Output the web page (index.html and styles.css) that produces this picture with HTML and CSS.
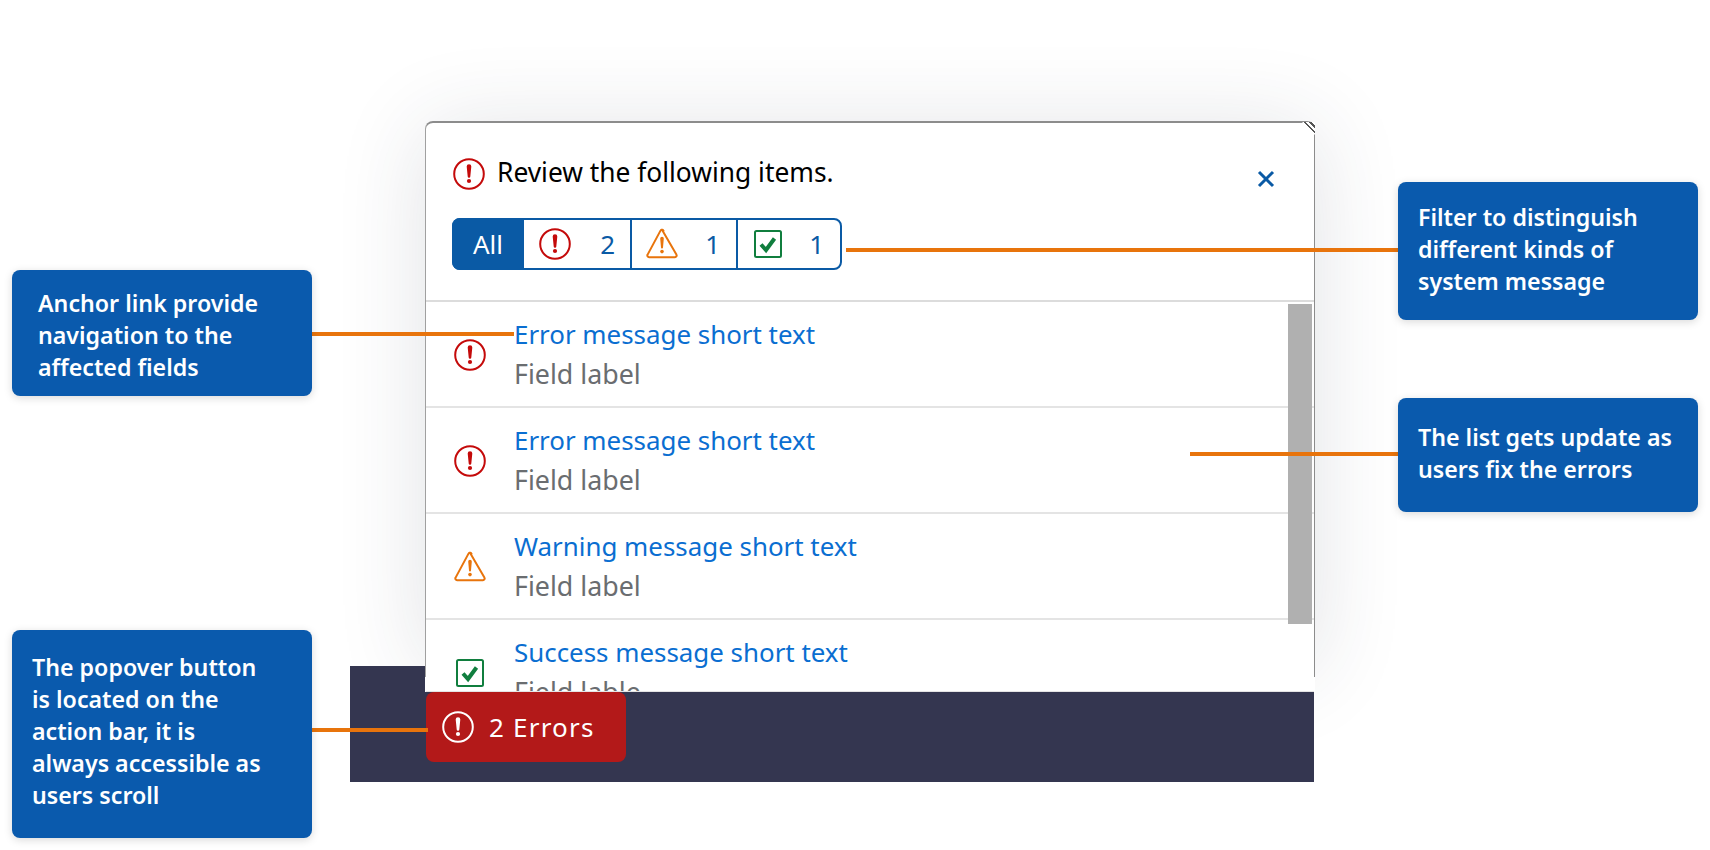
FILE: index.html
```html
<!DOCTYPE html>
<html lang="en">
<head>
    <meta charset="UTF-8">
    <title>Message popover annotations</title>
    <link rel="stylesheet" href="styles.css">
</head>
<body>
    <svg class="icon-defs" width="0" height="0">
        <symbol id="icon-error" viewBox="0 0 32 32">
            <circle cx="16" cy="16" r="14.8" fill="none" stroke="currentColor" stroke-width="2"/>
            <path d="M13.7 8.6a2.3 2.3 0 0 1 4.6 0L17.3 18.4a1.3 1.3 0 0 1-2.6 0z" fill="currentColor"/>
            <circle cx="16" cy="23" r="2.1" fill="currentColor"/>
        </symbol>
        <symbol id="icon-warning" viewBox="0 0 32 32">
            <path d="M16 1.8 30.4 26.6a1.7 1.7 0 0 1-1.5 2.6H3.1a1.7 1.7 0 0 1-1.5-2.6L14.5 2.6a1.7 1.7 0 0 1 3 0z" fill="none" stroke="currentColor" stroke-width="2" stroke-linejoin="round"/>
            <path d="M14.2 10.5a1.8 1.8 0 0 1 3.6 0l-.8 9a1 1 0 0 1-2 0z" fill="currentColor"/>
            <circle cx="16" cy="23.6" r="1.8" fill="currentColor"/>
        </symbol>
        <symbol id="icon-success" viewBox="0 0 28 28">
            <rect x="1" y="1" width="26" height="26" rx="1.5" fill="none" stroke="currentColor" stroke-width="2"/>
            <path d="M7 14.5 12 20 20.5 8.5" fill="none" stroke="currentColor" stroke-width="4"/>
        </symbol>
    </svg>

    <div class="canvas">
        <div class="popover-shadow"></div>
        <div class="action-bar"></div>

        <section class="popover">
            <div class="popover-head">
                <div class="popover-title">
                    <svg class="icon icon-red"><use href="#icon-error"/></svg>
                    <span>Review the following items.</span>
                </div>
                <svg class="close-icon" viewBox="0 0 18 18"><path d="M2 2 16 16M16 2 2 16"/></svg>
            </div>
            <div class="filter">
                <div class="filter-item filter-all">All</div>
                <div class="filter-item filter-error">
                    <svg class="icon icon-red"><use href="#icon-error"/></svg><span>2</span>
                </div>
                <div class="filter-item filter-warning">
                    <svg class="icon icon-orange"><use href="#icon-warning"/></svg><span>1</span>
                </div>
                <div class="filter-item filter-success">
                    <svg class="icon-check icon-green"><use href="#icon-success"/></svg><span>1</span>
                </div>
            </div>
            <div class="message-list">
                <div class="message">
                    <svg class="icon icon-red"><use href="#icon-error"/></svg>
                    <div class="message-text">
                        <a class="message-link">Error message short text</a>
                        <div class="message-label">Field label</div>
                    </div>
                </div>
                <div class="message">
                    <svg class="icon icon-red"><use href="#icon-error"/></svg>
                    <div class="message-text">
                        <a class="message-link">Error message short text</a>
                        <div class="message-label">Field label</div>
                    </div>
                </div>
                <div class="message">
                    <svg class="icon icon-orange"><use href="#icon-warning"/></svg>
                    <div class="message-text">
                        <a class="message-link">Warning message short text</a>
                        <div class="message-label">Field label</div>
                    </div>
                </div>
                <div class="message">
                    <svg class="icon-check icon-green"><use href="#icon-success"/></svg>
                    <div class="message-text">
                        <a class="message-link">Success message short text</a>
                        <div class="message-label">Field lable</div>
                    </div>
                </div>
                <div class="scrollbar"></div>
            </div>
            <div class="corner"></div>
        </section>

        <div class="error-button">
            <svg class="icon"><use href="#icon-error"/></svg>
            <span>2 Errors</span>
        </div>

        <div class="leader leader-filter"></div>
        <div class="leader leader-anchor"></div>
        <div class="leader leader-list"></div>
        <div class="leader leader-button"></div>

        <div class="callout callout-anchor">Anchor link provide navigation to the affected fields</div>
        <div class="callout callout-button">The popover button is located on the action bar, it is always accessible as users scroll</div>
        <div class="callout callout-filter">Filter to distinguish different kinds of system message</div>
        <div class="callout callout-list">The list gets update as users fix the errors</div>
    </div>
</body>
</html>
```

FILE: styles.css
```css
/* General styles */
body {
    margin: 0;
    background-color: #ffffff;
    font-family: "Noto Sans", sans-serif;
    overflow: hidden;
}

.icon-defs {
    display: block;
    height: 0;
}

/* Free canvas, the pieces of the annotated diagram sit on it */
.canvas {
    position: relative;
    width: 1710px;
    height: 850px;
    overflow: hidden;
}

/* Shadow sits under the action bar, so the bar stays clean */
.popover-shadow {
    position: absolute;
    left: 425px;
    top: 121px;
    width: 890px;
    height: 540px;
    border-radius: 8px;
    box-shadow: 0 8px 90px rgba(40, 50, 70, 0.14);
}

.action-bar {
    position: absolute;
    left: 350px;
    top: 666px;
    width: 964px;
    height: 116px;
    background-color: #343650;
}

/* Popover */
.popover {
    position: absolute;
    left: 425px;
    top: 121px;
    width: 890px;
    height: 571px;
    box-sizing: border-box;
    display: flex;
    flex-direction: column;
    background-color: #ffffff;
    border-top: 2px solid #8c8c8c;
    border-left: 1px solid #a0a0a0;
    border-right: 1px solid #8c8c8c;
    border-bottom: 1px solid #e4e4e4;
    border-radius: 8px 8px 0 0;
}

/* The side borders stop short of the bottom edge */
.popover::after {
    content: "";
    position: absolute;
    left: -1px;
    right: -1px;
    bottom: -1px;
    height: 15px;
    border-left: 1px solid #ffffff;
    border-right: 1px solid #ffffff;
}

.popover-head {
    display: flex;
    justify-content: space-between;
    padding: 35px 39px 0 27px;
}

.popover-title {
    display: flex;
    align-items: center;
    gap: 12px;
    height: 32px;
    font-size: 26.35px;
    line-height: 28px;
    color: #000000;
}

.popover-title span {
    margin-top: -4px;
}

.close-icon {
    width: 18px;
    height: 18px;
    margin-top: 12px;
    fill: none;
    stroke: #0a5aa5;
    stroke-width: 3;
}

.icon {
    display: block;
    flex: none;
    width: 32px;
    height: 32px;
}

.icon-check {
    display: block;
    flex: none;
    width: 28px;
    height: 28px;
}

.icon-red {
    color: #c40a0a;
}

.icon-orange {
    color: #e8740c;
}

.icon-green {
    color: #107e3e;
}

/* Filter */
.filter {
    display: flex;
    width: 390px;
    height: 52px;
    box-sizing: border-box;
    margin: 28px 0 30px 26px;
    border: 2px solid #0a5aa5;
    border-radius: 8px;
    color: #0a5aa5;
    font-size: 26px;
}

.filter-item {
    display: flex;
    align-items: center;
    justify-content: space-between;
    box-sizing: border-box;
    border-left: 2px solid #0a5aa5;
}

.filter-all {
    width: 72px;
    justify-content: center;
    border-left: 0;
    margin: -2px 0 -2px -2px;
    border-radius: 8px 0 0 8px;
    background-color: #0a5aa5;
    color: #ffffff;
}

.filter-error {
    width: 106px;
    padding: 0 15px 0 15px;
    border-left: 0;
}

.filter-warning {
    width: 106px;
    padding: 0 16px 0 14px;
}

.filter-success {
    flex: 1;
    padding: 0 16px 0 16px;
}

/* Message list */
.message-list {
    position: relative;
    flex: 1;
    overflow: hidden;
    border-top: 2px solid #dcdcdc;
}

.message {
    display: flex;
    align-items: center;
    height: 106px;
    box-sizing: border-box;
    padding: 0 0 0 28px;
    border-bottom: 2px solid #e4e4e4;
}

.message > svg {
    margin-top: 2px;
}

.message .icon-check {
    margin: 2px 2px 0;
}

.message-text {
    margin-left: 28px;
}

.message-link {
    display: block;
    font-size: 25.9px;
    line-height: 36px;
    color: #0a6ed1;
}

.message-label {
    margin-top: 4px;
    font-size: 26.8px;
    line-height: 36px;
    color: #6a6d70;
}

.scrollbar {
    position: absolute;
    right: 2px;
    top: 2px;
    width: 24px;
    height: 320px;
    background-color: #b0b0b0;
}

/* Striped corner of the popover */
.corner {
    position: absolute;
    right: -1px;
    top: -1px;
    width: 13px;
    height: 13px;
    background: repeating-linear-gradient(45deg, #ffffff 0 2px, #555555 2px 4px);
    clip-path: polygon(0 0, 100% 0, 100% 100%);
}

/* Red button on the action bar */
.error-button {
    position: absolute;
    left: 426px;
    top: 692px;
    width: 200px;
    height: 70px;
    box-sizing: border-box;
    display: flex;
    align-items: center;
    gap: 15px;
    padding-left: 16px;
    border-radius: 8px;
    background-color: #b31919;
    color: #ffffff;
    font-size: 26px;
    letter-spacing: 1.2px;
}

/* Orange lines from the notes to what they describe */
.leader {
    position: absolute;
    height: 4px;
    background-color: #e8740c;
}

.leader-filter {
    left: 846px;
    top: 248px;
    width: 552px;
}

.leader-anchor {
    left: 312px;
    top: 332px;
    width: 202px;
}

.leader-list {
    left: 1190px;
    top: 452px;
    width: 208px;
}

.leader-button {
    left: 312px;
    top: 728px;
    width: 116px;
}

/* Blue notes */
.callout {
    position: absolute;
    box-sizing: border-box;
    width: 300px;
    border-radius: 8px;
    background-color: #0a5aad;
    color: #ffffff;
    font-size: 23.2px;
    font-weight: 600;
    line-height: 32px;
    box-shadow: 0 2px 8px rgba(0, 0, 0, 0.15);
}

.callout-anchor {
    left: 12px;
    top: 270px;
    height: 126px;
    padding: 17px 30px 0 26px;
}

.callout-button {
    left: 12px;
    top: 630px;
    height: 208px;
    padding: 21px 40px 0 20px;
}

.callout-filter {
    left: 1398px;
    top: 182px;
    height: 138px;
    padding: 19px 30px 0 20px;
}

.callout-list {
    left: 1398px;
    top: 398px;
    height: 114px;
    padding: 23px 20px 0 20px;
}
```
